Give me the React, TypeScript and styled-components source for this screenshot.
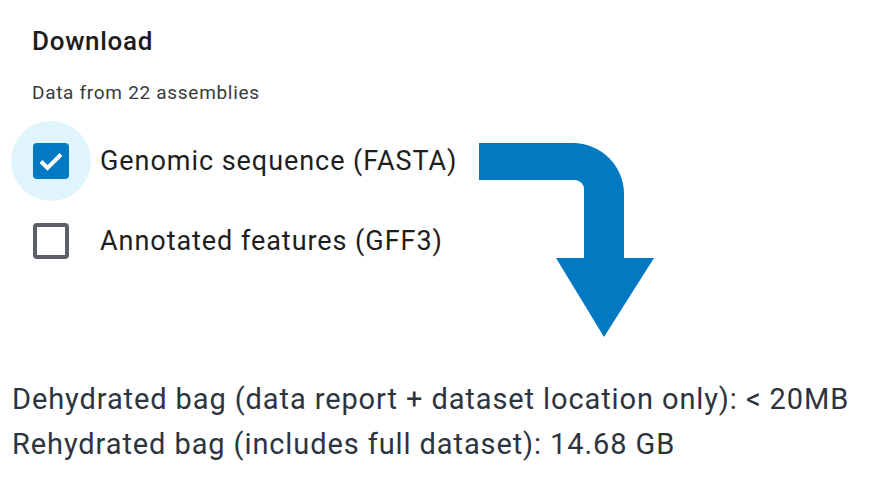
import styled, { createGlobalStyle } from "styled-components";

const GlobalStyle = createGlobalStyle`
  body {
    margin: 0;
    background: #ffffff;
    font-family: Roboto, "Noto Sans", sans-serif;
  }
`;

const Page = styled.div`
  width: 881px;
  height: 485px;
  overflow: hidden;
  background: #ffffff;
`;

const Panel = styled.section`
  padding: 24px 0 0 32px;
`;

const Title = styled.h2`
  margin: 0;
  font-size: 26px;
  font-weight: 500;
  letter-spacing: 0.7px;
  line-height: 34px;
  color: #1c1c1c;
`;

const Subtitle = styled.p`
  margin: 24px 0 0;
  font-size: 19px;
  letter-spacing: 0.7px;
  line-height: 22px;
  color: #3a3a3a;
`;

const Row = styled.div`
  display: grid;
  grid-template-columns: 468px auto;
  margin: 17px 0 0 -21px;
`;

const Options = styled.div`
  display: flex;
  flex-direction: column;
`;

const Option = styled.label`
  display: flex;
  align-items: center;
  height: 80px;
  gap: 9px;
  font-size: 27px;
  letter-spacing: 0.95px;
  color: #1e1e1e;
`;

const Halo = styled.span<{ $checked: boolean }>`
  width: 80px;
  height: 80px;
  border-radius: 50%;
  display: flex;
  align-items: center;
  justify-content: center;
  background: ${(p) => (p.$checked ? "#dff5fb" : "transparent")};
`;

const Box = styled.span<{ $checked: boolean }>`
  box-sizing: border-box;
  width: 36px;
  height: 36px;
  border-radius: 4px;
  display: flex;
  align-items: center;
  justify-content: center;
  background: ${(p) => (p.$checked ? "#0279c2" : "#ffffff")};
  border: ${(p) => (p.$checked ? "none" : "4px solid #5b5f68")};
`;

const Arrow = styled.svg`
  margin-top: 22px;
  display: block;
`;

const Sizes = styled.div`
  padding: 40px 0 0 12px;
  font-size: 29px;
  letter-spacing: 0.9px;
  line-height: 45px;
  color: #2c3440;
`;

const options = [
  { label: "Genomic sequence (FASTA)", checked: true },
  { label: "Annotated features (GFF3)", checked: false },
];

export default function App() {
  return (
    <Page>
      <GlobalStyle />
      <Panel>
        <Title>Download</Title>
        <Subtitle>Data from 22 assemblies</Subtitle>
        <Row>
          <Options>
            {options.map((o) => (
              <Option key={o.label}>
                <Halo $checked={o.checked}>
                  <Box $checked={o.checked}>
                    {o.checked && (
                      <svg width="36" height="36" viewBox="0 0 36 36">
                        <path
                          d="M8 18.5 L14.5 25 L28 11.5"
                          fill="none"
                          stroke="#ffffff"
                          strokeWidth="4"
                        />
                      </svg>
                    )}
                  </Box>
                </Halo>
                {o.label}
              </Option>
            ))}
          </Options>
          <Arrow width="175" height="194" viewBox="479 145 175 194">
            <path
              d="M479 145 H573 A51 51 0 0 1 624 196 V260 H654 L604 339 L556 260 H584 V191 A9 9 0 0 0 575 182 H479 Z"
              fill="#0279c1"
            />
          </Arrow>
        </Row>
      </Panel>
      <Sizes>
        <div>Dehydrated bag (data report + dataset location only): &lt; 20MB</div>
        <div>Rehydrated bag (includes full dataset): 14.68 GB</div>
      </Sizes>
    </Page>
  );
}
